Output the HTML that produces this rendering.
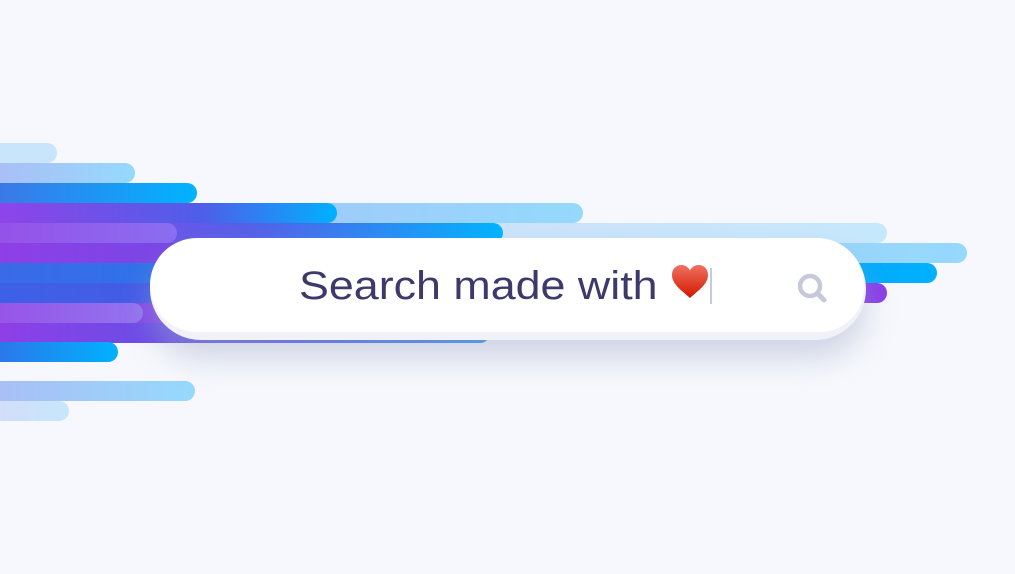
<!DOCTYPE html>
<html><head><style>
html,body{margin:0;padding:0}
body{width:1015px;height:574px;background:#f7f8fd;position:relative;overflow:hidden;font-family:"Liberation Sans",sans-serif}
.s{position:absolute;height:20px;border-radius:0 10px 10px 0;left:0}
</style></head><body>
<div class="s" style="top:143px;width:57px;background:#c9e5fc"></div>
<div class="s" style="top:163px;width:135px;background:linear-gradient(90deg,#a9bff5,#96d9fd)"></div>
<div class="s" style="top:183px;width:197px;background:linear-gradient(90deg,#3b78e8,#00b4ff)"></div>
<div class="s" style="top:203px;width:583px;background:linear-gradient(90deg,#a9bcf5,#95d9fd)"></div>
<div class="s" style="top:203px;width:337px;background:linear-gradient(90deg,#8e44e8,#4e5ee8 60%,#00b1ff)"></div>
<div class="s" style="top:223px;width:887px;background:linear-gradient(90deg,#d4dcf9,#c6e8fd)"></div>
<div class="s" style="top:223px;width:503px;background:linear-gradient(90deg,#8f45e8,#5560e8 50%,#00b4ff)"></div>
<div class="s" style="top:223px;width:177px;background:linear-gradient(90deg,#9552e8,#8a6ef0)"></div>
<div class="s" style="top:243px;width:967px;background:linear-gradient(90deg,#a8bff5,#96d9fd)"></div>
<div class="s" style="top:243px;width:500px;background:linear-gradient(90deg,#8e3fe6,#4e56e6)"></div>
<div class="s" style="top:263px;width:937px;background:linear-gradient(90deg,#3a6ae6,#1b84f0 50%,#00b1ff)"></div>
<div class="s" style="top:283px;width:887px;background:linear-gradient(90deg,#3d60e6,#5a4ee8 60%,#8a3de8)"></div>
<div class="s" style="top:303px;width:500px;background:linear-gradient(90deg,#8e42e8,#6a52e8)"></div>
<div class="s" style="top:303px;width:143px;background:linear-gradient(90deg,#9655e8,#9274ef)"></div>
<div class="s" style="top:323px;width:490px;background:linear-gradient(90deg,#8e3fe6,#4a5ae6 60%,#2d8cf0)"></div>
<div class="s" style="top:342px;width:118px;background:linear-gradient(90deg,#2a78ea,#00b2ff)"></div>
<div class="s" style="top:381px;width:195px;background:linear-gradient(90deg,#a9bff5,#96d9fd)"></div>
<div class="s" style="top:401px;width:69px;background:linear-gradient(90deg,#d3def9,#c7e6fd)"></div>
<div style="position:absolute;left:150px;top:238px;width:716px;height:102px;border-radius:51px;background:#f0f2f7;box-shadow:0 18px 30px rgba(160,170,200,.45)"></div>
<div style="position:absolute;left:150px;top:238px;width:714px;height:94px;border-radius:51px 51px 48px 51px;background:#fff"></div>
<div style="position:absolute;left:299px;top:262px;font-size:40px;line-height:48px;color:#3d3a6b;white-space:nowrap;transform:scaleX(1.12);transform-origin:0 0">Search made with</div>
<svg style="position:absolute;left:671px;top:264px" width="38" height="36" viewBox="0 0 38 36"><defs><linearGradient id="h" x1="0" y1="0" x2="0" y2="1"><stop offset="0" stop-color="#f07060"/><stop offset="1" stop-color="#d01800"/></linearGradient></defs><path d="M19 34 C10 26 1 20 1 11 C1 5 5 1 10.5 1 C14.5 1 17.5 3.5 19 6.5 C20.5 3.5 23.5 1 27.5 1 C33 1 37 5 37 11 C37 20 28 26 19 34Z" fill="url(#h)"/></svg>
<div style="position:absolute;left:710px;top:268px;width:2px;height:36px;background:#c5cadb"></div>
<svg style="position:absolute;left:794px;top:270px" width="36" height="36" viewBox="0 0 36 36"><circle cx="16" cy="16" r="10" fill="none" stroke="#c5c9da" stroke-width="4.5"/><line x1="23.5" y1="23.5" x2="30" y2="30" stroke="#c5c9da" stroke-width="5" stroke-linecap="round"/></svg>
</body></html>
